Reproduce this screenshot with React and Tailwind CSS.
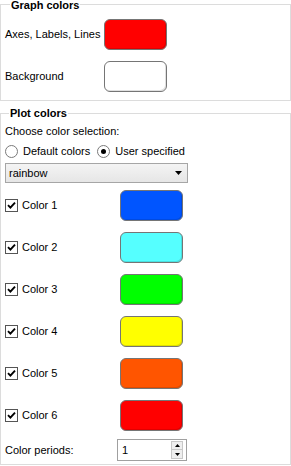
import React from "react";

const font = { fontFamily: '"Liberation Sans", Arial, sans-serif' };

function Swatch({ color }) {
  return (
    <div
      className="w-[63px] h-[31px] rounded-[6px] border border-[#757575] shadow-[inset_-1px_-1px_0_rgba(0,0,0,0.12)]"
      style={{ backgroundColor: color }}
    />
  );
}

function Check() {
  return (
    <div className="w-[13px] h-[13px] border border-[#555] bg-white flex items-center justify-center">
      <svg width="9" height="9" viewBox="0 0 9 9">
        <path d="M1 4.2 L3.4 6.6 L8 1.6" fill="none" stroke="#000" strokeWidth="1.9" />
      </svg>
    </div>
  );
}

function Radio({ checked }) {
  return (
    <div className="w-[13px] h-[13px] rounded-full border border-[#7a7a7a] bg-white flex items-center justify-center">
      {checked && <div className="w-[5px] h-[5px] rounded-full bg-black" />}
    </div>
  );
}

const colors = ["#0055ff", "#55ffff", "#00ff00", "#ffff00", "#ff5500", "#ff0000"];

export default function App() {
  return (
    <div className="w-[291px] h-[466px] bg-white text-[11px] text-black pt-[4px]" style={font}>
      <div className="relative h-[97px] border border-[#dcdcdc] pl-[4px] pt-[14px]">
        <span className="absolute left-[9px] top-[-5px] bg-white px-[1px] font-bold leading-[11px]">Graph colors</span>
        <div className="flex items-center h-[31px]">
          <div className="w-[99px] leading-[13px]">Axes, Labels, Lines</div>
          <Swatch color="#ff0000" />
        </div>
        <div className="flex items-center h-[31px] mt-[11px]">
          <div className="w-[99px] leading-[13px]">Background</div>
          <Swatch color="#ffffff" />
        </div>
      </div>

      <div className="relative mt-[12px] h-[352px] border border-[#dcdcdc] pl-[4px] pt-[11px]">
        <span className="absolute left-[8px] top-[-7px] bg-white px-[1px] font-bold leading-[13px]">Plot colors</span>
        <div className="leading-[13px]">Choose color selection:</div>
        <div className="flex items-center h-[13px] mt-[7px]">
          <Radio />
          <span className="ml-[5px] leading-[13px]">Default colors</span>
          <div className="ml-[7px]">
            <Radio checked />
          </div>
          <span className="ml-[5px] leading-[13px]">User specified</span>
        </div>
        <div className="mt-[5px] w-[183px] h-[20px] border border-[#a6a6a6] bg-gradient-to-b from-[#f4f4f4] to-[#e6e6e6] flex items-center pl-[3px] pr-[5px] justify-between">
          <span className="leading-[13px]">rainbow</span>
          <svg width="7" height="4" viewBox="0 0 7 4">
            <path d="M0 0 H7 L3.5 4 Z" fill="#000" />
          </svg>
        </div>
        <div className="mt-[7px] flex flex-col gap-[11px]">
          {colors.map((c, i) => (
            <div key={i} className="flex items-center h-[31px]">
              <div className="w-[115px] flex items-center">
                <Check />
                <span className="ml-[4px] leading-[13px]">Color {i + 1}</span>
              </div>
              <Swatch color={c} />
            </div>
          ))}
        </div>
        <div className="mt-[8px] flex items-center h-[22px]">
          <div className="w-[112px] leading-[13px]">Color periods:</div>
          <div className="w-[70px] h-[22px] border border-[#a0a0a0] bg-white flex items-center justify-between pl-[4px] pr-[3px]">
            <span className="leading-[13px]">1</span>
            <div className="flex flex-col">
              <div className="w-[12px] h-[9px] border border-[#c8c8c8] bg-[#efefef] flex items-center justify-center">
                <svg width="5" height="3" viewBox="0 0 5 3"><path d="M0 3 H5 L2.5 0 Z" fill="#000" /></svg>
              </div>
              <div className="w-[12px] h-[9px] border border-[#c8c8c8] border-t-0 bg-[#efefef] flex items-center justify-center">
                <svg width="5" height="3" viewBox="0 0 5 3"><path d="M0 0 H5 L2.5 3 Z" fill="#000" /></svg>
              </div>
            </div>
          </div>
        </div>
      </div>
    </div>
  );
}
